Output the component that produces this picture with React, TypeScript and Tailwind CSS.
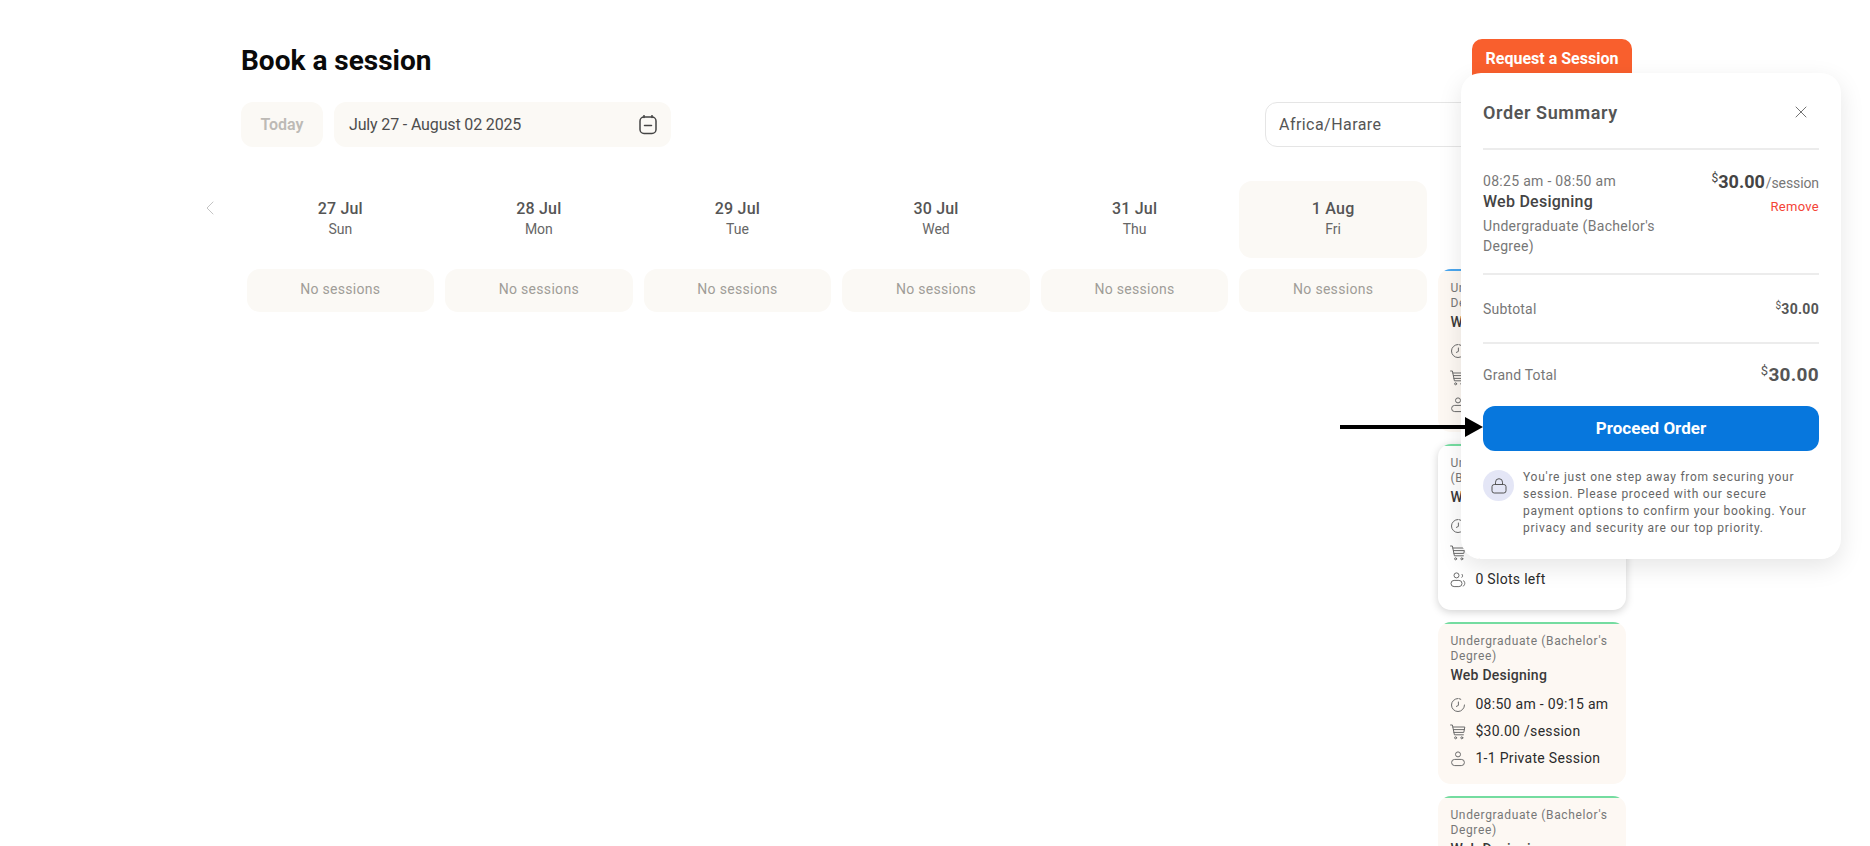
import { X, ChevronLeft } from 'lucide-react';

const days = [
  { date: '27 Jul', day: 'Sun' },
  { date: '28 Jul', day: 'Mon' },
  { date: '29 Jul', day: 'Tue' },
  { date: '30 Jul', day: 'Wed' },
  { date: '31 Jul', day: 'Thu' },
  { date: '1 Aug', day: 'Fri', active: true },
];

const sessions = [
  { time: '08:00 am - 08:25 am', seats: '1-1 Private Session', top: 'bg-[#4aa6ee]', first: true },
  { time: '08:25 am - 08:50 am', seats: '0 Slots left', top: 'bg-[#74dca0]', selected: true },
  { time: '08:50 am - 09:15 am', seats: '1-1 Private Session', top: 'bg-[#74dca0]' },
  { time: '09:15 am - 09:40 am', seats: '1-1 Private Session', top: 'bg-[#74dca0]' },
];

function ClockIcon() {
  return (
    <svg width="16" height="16" viewBox="0 0 16 16" fill="none" stroke="#6b6b6b" strokeWidth="1" strokeLinecap="round">
      <path d="M8 1.5a6.5 6.5 0 1 0 6.5 6.5" />
      <path d="M9.2 1.7a6.5 6.5 0 0 1 1.6.6" />
      <path d="M8.4 5v3.4l-2 1" />
    </svg>
  );
}

function CartIcon() {
  return (
    <svg width="16" height="16" viewBox="0 0 16 16" fill="none" stroke="#6b6b6b" strokeWidth="1" strokeLinecap="round">
      <path d="M0.6 1h1.8l2 9.8h9" />
      <path d="M2.8 3h12l-1 5.4H3.9" />
      <path d="M3.4 5.6h11" />
      <circle cx="5.6" cy="13.8" r="1" />
      <circle cx="11.8" cy="13.8" r="1" />
    </svg>
  );
}

function PersonIcon({ group }: { group?: boolean }) {
  return (
    <svg width="16" height="16" viewBox="0 0 16 16" fill="none" stroke="#6b6b6b" strokeWidth="1">
      <circle cx={group ? 6.5 : 8} cy="3.4" r="2.5" />
      <rect x={group ? 1 : 1.6} y="8.4" width={group ? 11 : 12.8} height="6.2" rx="3.1" />
      {group && <path d="M11.6 2a2.2 2.2 0 0 1 0 3.6M13 8.6c2.4.6 2.4 5-.2 5.6" />}
    </svg>
  );
}

type CardProps = { time: string; seats: string; top: string; selected?: boolean; first?: boolean };

function SessionCard({ time, seats, top, selected, first }: CardProps) {
  return (
    <div
      className={`overflow-hidden rounded-[13px] ${
        selected
          ? 'h-[166px] bg-white shadow-[0_2px_8px_rgba(0,0,0,0.18)]'
          : first
            ? '-mt-px h-[163px] bg-[#fdf8f3]'
            : 'h-[162px] bg-[#fdf8f3]'
      }`}
    >
      <div className={`h-[2px] ${top}`} />
      <div className="px-3 pt-[10px]">
        <div className="text-[12px] leading-[15px] tracking-[0.65px] text-[#777]">
          {selected ? (
            <>
              Undergraduate
              <br />
              (Bachelor's Degree)
            </>
          ) : (
            "Undergraduate (Bachelor's Degree)"
          )}
        </div>
        <div className="mt-px text-[14px] font-medium leading-[20px] tracking-[0.25px] text-[#3a3a3a]">Web Designing</div>
        <div
          className={`flex h-[27px] items-center gap-[9px] text-[14px] tracking-[0.3px] text-[#2b2b2b] ${
            selected || first ? 'mt-[5px]' : 'mt-[6px]'
          }`}
        >
          <ClockIcon />
          {time}
        </div>
        <div className="flex h-[27px] items-center gap-[9px] text-[14px] tracking-[0.3px] text-[#2b2b2b]">
          <CartIcon />
          $30.00 /session
        </div>
        <div className="flex h-[27px] items-center gap-[9px] text-[14px] tracking-[0.3px] text-[#2b2b2b]">
          <PersonIcon group={selected} />
          {seats}
        </div>
      </div>
    </div>
  );
}

function OrderSummary() {
  return (
    <div className="absolute left-[1461px] top-[73px] h-[486px] w-[380px] rounded-[20px] bg-white px-[22px] shadow-[0_8px_24px_rgba(0,0,0,0.1)]">
      <div className="flex h-[77px] items-center justify-between border-b-2 border-[#ececec] pt-[3px]">
        <h2 className="text-[18px] font-semibold tracking-[0.6px] text-[#555]">Order Summary</h2>
        <X className="mr-[8px] h-[20px] w-[20px] text-[#666]" strokeWidth={1.1} />
      </div>

      <div className="flex h-[125px] justify-between border-b-2 border-[#ececec] pt-[21px]">
        <div className="w-[190px]">
          <div className="text-[14px] leading-[20px] tracking-[0.3px] text-[#777]">08:25 am - 08:50 am</div>
          <div className="text-[16px] font-medium leading-[22px] tracking-[0.25px] text-[#444]">Web Designing</div>
          <div className="mt-[3px] text-[14px] leading-[20px] tracking-[0.3px] text-[#777]">
            Undergraduate (Bachelor's Degree)
          </div>
        </div>
        <div className="text-right">
          <div className="leading-[22px] text-[#777]">
            <sup className="text-[12px] text-[#444]">$</sup>
            <span className="text-[18px] font-bold text-[#444]">30.00</span>
            <span className="ml-px text-[14px] tracking-[-0.1px]">/session</span>
          </div>
          <div className="mt-[3px] text-[13px] tracking-[0.3px] text-[#f44336]">Remove</div>
        </div>
      </div>

      <div className="flex h-[69px] items-center justify-between border-b-2 border-[#ececec] pt-[2px]">
        <span className="text-[14px] tracking-[0.2px] text-[#777]">Subtotal</span>
        <span className="text-[14px] font-bold tracking-[0.3px] text-[#555]">
          <sup className="text-[10px] font-normal">$</sup>30.00
        </span>
      </div>

      <div className="flex h-[62px] items-center justify-between pt-px">
        <span className="text-[14px] tracking-[0.2px] text-[#777]">Grand Total</span>
        <span className="text-[19px] font-bold tracking-[0.3px] text-[#555]">
          <sup className="text-[13px] font-normal">$</sup>30.00
        </span>
      </div>

      <button className="h-[45px] w-full rounded-[12px] bg-[#0777dd] text-[17px] font-bold text-white">Proceed Order</button>

      <div className="mt-[18px] flex gap-[9px]">
        <div className="mt-px flex h-[31px] w-[31px] shrink-0 items-center justify-center rounded-full bg-[#e4e6f6]">
          <svg width="16" height="16" viewBox="0 0 16 16" fill="none" stroke="#555" strokeWidth="1">
            <rect x="1" y="6.5" width="14" height="8.5" rx="2.2" />
            <path d="M4.5 6.5V4.2a3.5 3.5 0 0 1 7 0v2.3" />
          </svg>
        </div>
        <p className="text-[12px] leading-[17px] tracking-[0.75px] text-[#666]">
          You're just one step away from securing your session. Please proceed with our secure payment options to confirm
          your booking. Your privacy and security are our top priority.
        </p>
      </div>
    </div>
  );
}

export default function App() {
  return (
    <div className="relative h-[846px] overflow-hidden bg-white font-['Roboto',sans-serif]">
      <div className="ml-[241px] w-[1390px] pt-[39px]">
        <div className="flex h-[45px] items-center justify-between">
          <h1 className="-mt-[2px] text-[28px] font-bold text-[#0a0a0a]">Book a session</h1>
          <button className="-mr-px h-[45px] w-[160px] self-start rounded-[10px] bg-[#f95f2d] pb-[5px] text-[16px] font-bold text-white">
            Request a Session
          </button>
        </div>

        <div className="mt-[18px] flex justify-between">
          <div className="flex gap-[11px]">
            <div className="flex h-[45px] w-[82px] items-center justify-center rounded-[12px] bg-[#fbf9f5] text-[16px] font-semibold text-[#bdbab5]">
              Today
            </div>
            <div className="flex h-[45px] w-[337px] items-center justify-between rounded-[12px] bg-[#fbf9f5] pl-[15px] pr-[13px] text-[16px] tracking-[-0.15px] text-[#4d4d4d]">
              July 27 - August 02 2025
              <svg width="20" height="20" viewBox="0 0 20 20" fill="none" stroke="#444" strokeWidth="1.5">
                <rect x="2" y="2" width="16" height="16.5" rx="4" />
                <path d="M6 0.5v2M14 0.5v2M6.5 10.5h7" strokeLinecap="round" />
              </svg>
            </div>
          </div>
          <div className="flex h-[45px] w-[366px] items-center rounded-[12px] border border-[#e5e5e5] px-[13px] text-[16px] tracking-[0.45px] text-[#555]">
            Africa/Harare
          </div>
        </div>

        <div className="relative mt-[34px] grid grid-cols-7">
          <ChevronLeft className="absolute -left-[43px] top-[15px] h-[24px] w-[24px] text-[#c4c4c4]" strokeWidth={1} />
          {days.map((d) => (
            <div key={d.date} className="px-[5.5px]">
              <div
                className={`flex h-[77px] flex-col items-center justify-center rounded-[13px] pb-[2px] ${
                  d.active ? 'bg-[#fbf9f5]' : ''
                }`}
              >
                <div className="text-[16px] font-medium leading-[22px] tracking-[0.2px] text-[#555]">{d.date}</div>
                <div className="-mt-px text-[14px] leading-[20px] text-[#666]">{d.day}</div>
              </div>
              <div className="mt-[11px] flex h-[43px] items-center justify-center rounded-[13px] bg-[#fbf9f5] pb-[3px] text-[14px] tracking-[0.3px] text-[#a09d98]">
                No sessions
              </div>
            </div>
          ))}
          <div className="pl-[6px] pr-[5px]">
            <div className="h-[77px]" />
            <div className="mt-[12px] flex flex-col gap-[12px]">
              {sessions.map((s) => (
                <SessionCard key={s.time} {...s} />
              ))}
            </div>
          </div>
        </div>
      </div>

      <OrderSummary />

      <div className="absolute left-[1340px] top-[417px] flex items-center">
        <div className="h-[4px] w-[125px] bg-black" />
        <div className="h-0 w-0 border-y-[10px] border-l-[18px] border-y-transparent border-l-black" />
      </div>
    </div>
  );
}
